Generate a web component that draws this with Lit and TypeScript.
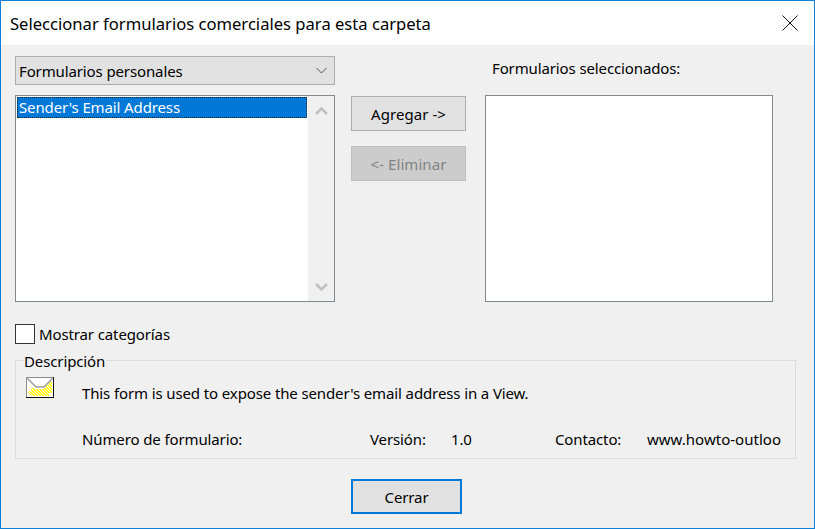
import { LitElement, html, css, svg } from "lit";
import { customElement } from "lit/decorators.js";

function envelopeDots() {
  const dots = [];
  for (let y = 2; y < 19; y++) {
    for (let x = 2; x < 26; x++) {
      if ((x + 2 * y) % 3 === 0) continue;
      const flap = x < 14 ? x + 1 : 27 - x;
      const lineY = Math.min(flap, 10);
      if (y <= lineY + 1) continue;
      if (x + y < 17 && x < 8) continue;
      if (y > 15 && x > 22) continue;
      if (x < 5 && (x + y) % 2 === 0) continue;
      dots.push(svg`<rect x=${x} y=${y} width="1" height="1" fill="#ffff00"></rect>`);
    }
  }
  return dots;
}

@customElement("app-root")
export class AppRoot extends LitElement {
  static styles = css`
    :host {
      display: block;
      width: 815px;
      height: 529px;
      font-family: "Noto Sans", "Open Sans", sans-serif;
      font-size: 15px;
      letter-spacing: -0.12px;
      color: #000;
      overflow: hidden;
    }
    .win {
      box-sizing: border-box;
      width: 815px;
      height: 529px;
      border: 1px solid #0f7fd8;
      background: #f0f0f0;
      display: flex;
      flex-direction: column;
    }
    .title {
      height: 44px;
      flex: none;
      background: #fff;
      display: flex;
      align-items: center;
      justify-content: space-between;
      padding: 0 16px 0 9px;
      font-size: 16.6px;
      letter-spacing: 0;
    }
    .title svg { display: block; }
    .body {
      flex: 1;
      padding: 11px 18px 0 14px;
      display: flex;
      flex-direction: column;
    }
    .top { display: flex; height: 246px; }
    .left { width: 320px; flex: none; display: flex; flex-direction: column; gap: 10px; }
    .select {
      box-sizing: border-box;
      height: 29px;
      background: #e1e1e1;
      border: 1px solid #adadad;
      display: flex;
      align-items: center;
      justify-content: space-between;
      padding: 0 7px 0 3px;
    }
    .list {
      box-sizing: border-box;
      flex: 1;
      background: #fff;
      border: 1px solid #828790;
      display: flex;
    }
    .items { flex: 1; padding: 1px 1px 0 1px; }
    .item {
      box-sizing: border-box;
      height: 21px;
      line-height: 21px;
      background: #0078d7;
      color: #fff;
      outline: 1px dotted #222;
      outline-offset: -1px;
      padding-left: 2px;
    }
    .scroll {
      width: 26px;
      flex: none;
      background: #f0f0f0;
      display: flex;
      flex-direction: column;
      justify-content: space-between;
      align-items: center;
      padding: 10px 0 9px;
    }
    .mid {
      width: 150px;
      flex: none;
      display: flex;
      flex-direction: column;
      gap: 15px;
      padding: 40px 0 0 16px;
      box-sizing: border-box;
    }
    .btn {
      box-sizing: border-box;
      width: 115px;
      height: 35px;
      background: #e1e1e1;
      border: 1px solid #adadad;
      display: flex;
      align-items: center;
      justify-content: center;
      letter-spacing: 0.06px;
    }
    .btn.off { background: #cccccc; border-color: #bfbfbf; color: #838383; }
    .right { width: 288px; flex: none; display: flex; flex-direction: column; }
    .right .lbl { height: 39px; padding-left: 7px; line-height: 24px; box-sizing: border-box; }
    .check {
      margin-top: 22px;
      height: 20px;
      display: flex;
      align-items: center;
      gap: 4px;
    }
    .box { box-sizing: border-box; width: 20px; height: 20px; background: #fff; border: 1px solid #333; }
    .group {
      position: relative;
      box-sizing: border-box;
      margin-top: 16px;
      width: 781px;
      height: 99px;
      border: 1px solid #dcdcdc;
      padding: 16px 14px 0 10px;
    }
    .legend {
      position: absolute;
      left: 7px;
      top: -9px;
      padding: 0 1px;
      background: #f0f0f0;
      line-height: 18px;
    }
    .desc { display: flex; height: 52px; }
    .icon { width: 56px; flex: none; }
    .icon svg { display: block; }
    .desc .text { padding-top: 4px; line-height: 24px; }
    .meta { display: flex; }
    .meta span { white-space: nowrap; }
    .c1 { margin-left: 56px; width: 288px; }
    .c2 { width: 81px; }
    .c3 { width: 104px; }
    .c4 { width: 92px; }
    .url { letter-spacing: 0.02px; }
    .footer { display: flex; padding: 20px 0 0 336px; }
    .close {
      box-sizing: border-box;
      width: 111px;
      height: 35px;
      background: #e1e1e1;
      border: 2px solid #0078d7;
      display: flex;
      align-items: center;
      justify-content: center;
    }
  `;

  render() {
    return html`
      <div class="win">
        <div class="title">
          <span>Seleccionar formularios comerciales para esta carpeta</span>
          <svg width="16" height="16" viewBox="0 0 16 16"><path d="M.5 .5 15.5 15.5M15.5 .5 .5 15.5" stroke="#111" stroke-width="1" fill="none"/></svg>
        </div>
        <div class="body">
          <div class="top">
            <div class="left">
              <div class="select">
                <span>Formularios personales</span>
                <svg width="11" height="7" viewBox="0 0 11 7"><path d="M.5 1 5.5 6 10.5 1" stroke="#555" fill="none"/></svg>
              </div>
              <div class="list">
                <div class="items"><div class="item">Sender's Email Address</div></div>
                <div class="scroll">
                  <svg width="13" height="9" viewBox="0 0 13 9"><path d="M1 8 6.5 2.5 12 8" stroke="#c0c0c0" stroke-width="2.5" fill="none"/></svg>
                  <svg width="13" height="9" viewBox="0 0 13 9"><path d="M1 1 6.5 6.5 12 1" stroke="#c0c0c0" stroke-width="2.5" fill="none"/></svg>
                </div>
              </div>
            </div>
            <div class="mid">
              <div class="btn">Agregar -&gt;</div>
              <div class="btn off">&lt;- Eliminar</div>
            </div>
            <div class="right">
              <div class="lbl">Formularios seleccionados:</div>
              <div class="list"></div>
            </div>
          </div>
          <div class="check"><div class="box"></div><span>Mostrar categorías</span></div>
          <div class="group">
            <div class="legend">Descripción</div>
            <div class="desc">
              <div class="icon">
                <svg width="28" height="21" viewBox="0 0 28 21" shape-rendering="crispEdges">
                  <rect x="0" y="0" width="28" height="21" fill="#fff"/>
                  ${envelopeDots()}
                  <path d="M1.5 1.5 10 10H18L26.5 1.5" stroke="#a0a0a0" stroke-width="1.6" fill="none" shape-rendering="auto"/>
                  <path d="M0 .5H27.5V20.5H.5V0" stroke="#8a8a8a" fill="none"/>
                  <path d="M0 20.5H28M27.5 0V21" stroke="#111" fill="none"/>
                </svg>
              </div>
              <div class="text">This form is used to expose the sender's email address in a View.</div>
            </div>
            <div class="meta">
              <span class="c1">Número de formulario:</span>
              <span class="c2">Versión:</span>
              <span class="c3">1.0</span>
              <span class="c4">Contacto:</span>
              <span class="url">www.howto-outloo</span>
            </div>
          </div>
          <div class="footer"><div class="close">Cerrar</div></div>
        </div>
      </div>
    `;
  }
}
